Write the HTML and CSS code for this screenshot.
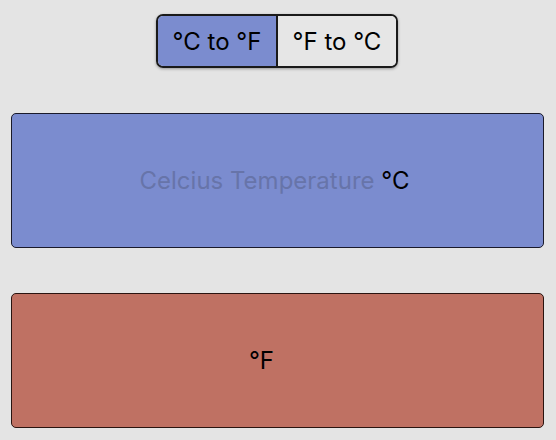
FILE: index.html
```html
<!DOCTYPE html>
<html>
<head>
<meta charset="utf-8">
<link rel="stylesheet" href="styles.css">
</head>
<body>
<div class="page">
  <div class="seg">
    <div class="seg-item active">°C to °F</div>
    <div class="seg-item">°F to °C</div>
  </div>
  <div class="field celsius">
    <span class="placeholder">Celcius Temperature</span>&nbsp;<span class="unit">°C</span>
  </div>
  <div class="field fahr">
    <span class="unit">°F</span>
  </div>
</div>
</body>
</html>
```
FILE: styles.css
```css
html, body {
  margin: 0;
  padding: 0;
  background: #e4e4e4;
  width: 556px;
  height: 440px;
  overflow: hidden;
  font-family: Inter, "Liberation Sans", Arial, sans-serif;
}
.page {
  display: flex;
  flex-direction: column;
  align-items: center;
  padding-top: 14px;
}
.seg {
  display: flex;
  height: 50px;
  margin-right: 2px;
  border: 2px solid #1a1a1a;
  border-radius: 7px;
  overflow: hidden;
  box-shadow: 0 1px 3px rgba(0,0,0,0.35);
}
.seg-item {
  width: 118px;
  display: flex;
  align-items: center;
  justify-content: center;
  font-size: 24px;
  color: #000;
  background: #e6e6e6;
}
.seg-item.active {
  background: #7b8ccf;
  border-right: 2px solid #1a1a1a;
}
.field {
  box-sizing: border-box;
  width: 533px;
  height: 135px;
  border: 1px solid #1a1a2a;
  border-radius: 5px;
  display: flex;
  align-items: center;
  justify-content: center;
  font-size: 24px;
  color: #000;
  align-self: flex-start;
  margin-left: 11px;
}
.celsius {
  margin-top: 45px;
  background: #7b8ccf;
  padding-right: 6px;
}
.fahr {
  margin-top: 45px;
  background: #bf7163;
  border-color: #2a1410;
  padding-right: 32px;
}
.placeholder {
  color: #6774a9;
}
```
